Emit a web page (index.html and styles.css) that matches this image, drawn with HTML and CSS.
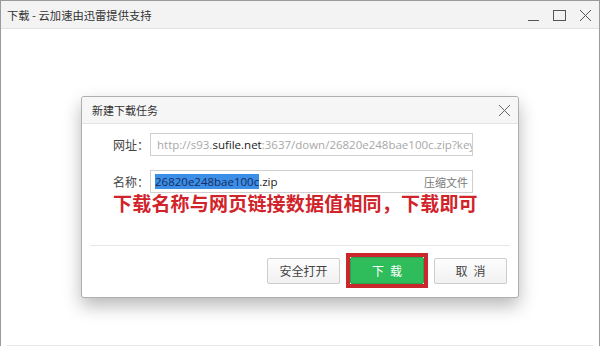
FILE: index.html
```html
<!DOCTYPE html>
<html lang="zh">
<head>
<meta charset="utf-8">
<title>下载</title>
<link rel="stylesheet" href="styles.css">
</head>
<body>
<div class="window">
  <div class="titlebar">
    <span class="title">下载 - 云加速由迅雷提供支持</span>
    <div class="controls">
      <svg class="ctl" width="14" height="14" viewBox="0 0 14 14"><line x1="1" y1="11.5" x2="12" y2="11.5" stroke="#555" stroke-width="1"/></svg>
      <svg class="ctl" width="14" height="14" viewBox="0 0 14 14"><rect x="0.5" y="1.5" width="12" height="10" fill="none" stroke="#555" stroke-width="1"/></svg>
      <svg class="ctl" width="14" height="14" viewBox="0 0 14 14"><path d="M1 1 L12 12 M12 1 L1 12" stroke="#555" stroke-width="1" fill="none"/></svg>
    </div>
  </div>
  <div class="content">
    <div class="dialog">
      <div class="dlg-head">
        <span>新建下载任务</span>
        <svg class="dlg-close" width="13" height="13" viewBox="0 0 13 13"><path d="M1 1 L12 12 M12 1 L1 12" stroke="#666" stroke-width="1" fill="none"/></svg>
      </div>
      <div class="dlg-body">
        <div class="row">
          <span class="label">网址：</span>
          <div class="field url"><span class="grey">http://s93.</span><span class="dark">sufile.net</span><span class="grey">:3637/down/26820e248bae100c.zip?key</span></div>
        </div>
        <div class="row row2">
          <span class="label">名称：</span>
          <div class="field name"><span class="sel">26820e248bae100c</span><span>.zip</span><span class="zip">压缩文件</span></div>
        </div>
        <div class="note">下载名称与网页链接数据值相同，下载即可</div>
      </div>
      <div class="dlg-foot">
        <button class="btn">安全打开</button>
        <span class="hl"><button class="btn green spaced">下载</button></span>
        <button class="btn spaced">取消</button>
      </div>
    </div>
  </div>
  <div class="bottomline"></div>
</div>
</body>
</html>
```

FILE: styles.css
```css
* { box-sizing: border-box; }
html, body { margin: 0; padding: 0; background: #fff; }
body {
  width: 600px;
  height: 359px;
  overflow: hidden;
  font-family: "Noto Sans CJK SC", "Open Sans", sans-serif;
  color: #333;
}
.window {
  width: 600px;
  height: 346px;
  border: 1px solid #9a9a9a;
  border-bottom: none;
  display: flex;
  flex-direction: column;
}
.titlebar {
  height: 28px;
  background: #f3f3f3;
  border-bottom: 1px solid #e2e2e2;
  display: flex;
  align-items: center;
  justify-content: space-between;
  padding-left: 6px;
  padding-right: 6px;
}
.title {
  font-size: 11.3px;
  color: #333;
}
.controls {
  display: flex;
  gap: 12px;
  align-items: center;
  padding-top: 2px;
}
.content {
  flex: 1;
  padding-top: 67px;
  padding-left: 80px;
}
.dialog {
  width: 438px;
  height: 202px;
  border: 1px solid #aeaeae;
  border-radius: 3px;
  background: #fff;
  box-shadow: 0 8px 18px rgba(0,0,0,0.28);
  display: flex;
  flex-direction: column;
}
.dlg-head {
  height: 27px;
  background: #f6f6f6;
  border-bottom: 1px solid #e4e4e4;
  border-radius: 3px 3px 0 0;
  display: flex;
  align-items: center;
  justify-content: space-between;
  padding: 0 7px 0 10px;
  font-size: 11px;
  color: #333;
}
.dlg-body {
  padding-top: 9px;
  height: 122px;
  border-bottom: 1px solid #e6e6e6;
  margin: 0 8px;
  padding-left: 23px;
}
.row {
  display: flex;
  align-items: center;
  height: 23px;
}
.row2 { margin-top: 14px; }
.label {
  width: 37px;
  font-size: 12px;
  color: #444;
}
.field {
  width: 323px;
  height: 23px;
  border: 1px solid #cfcfcf;
  display: flex;
  align-items: center;
  padding: 0 4px 0 6px;
  font-family: "Open Sans", "Noto Sans CJK SC", sans-serif;
  font-size: 11.5px;
  white-space: nowrap;
  overflow: hidden;
}
.grey { color: #a8a8a8; }
.dark { color: #222; }
.name { padding-left: 4px; color: #222; }
.sel {
  background: #3b8fe6;
  color: #1a2a60;
}
.zip {
  margin-left: auto;
  font-family: "Noto Sans CJK SC", sans-serif;
  font-size: 11px;
  color: #777;
}
.note {
  margin-top: -2px;
  margin-left: 0;
  font-size: 19px;
  letter-spacing: 0.2px;
  font-weight: bold;
  color: #d1232a;
  line-height: 24px;
  white-space: nowrap;
}
.dlg-foot {
  flex: 1;
  display: flex;
  align-items: center;
  justify-content: flex-end;
  padding-right: 11px;
  gap: 5px;
  padding-bottom: 2px;
}
.btn {
  width: 73px;
  height: 26px;
  border: 1px solid #cdcdcd;
  border-radius: 2px;
  background: linear-gradient(#fdfdfd, #f1f1f1);
  font-family: "Noto Sans CJK SC", sans-serif;
  font-size: 12px;
  color: #444;
  padding: 0;
}
.spaced {
  letter-spacing: 6px;
  text-indent: 6px;
}
.hl {
  display: flex;
  border: 4px solid #c9262d;
  padding: 0;
  margin: 0 1px;
}
.green {
  background: #2fbd5c;
  border: 1px solid #27a34f;
  color: #fff;
  width: 74px;
  height: 27px;
}
.bottomline {
  height: 1px;
  background: #e6e6e6;
  margin: 0 6px;
}
```
